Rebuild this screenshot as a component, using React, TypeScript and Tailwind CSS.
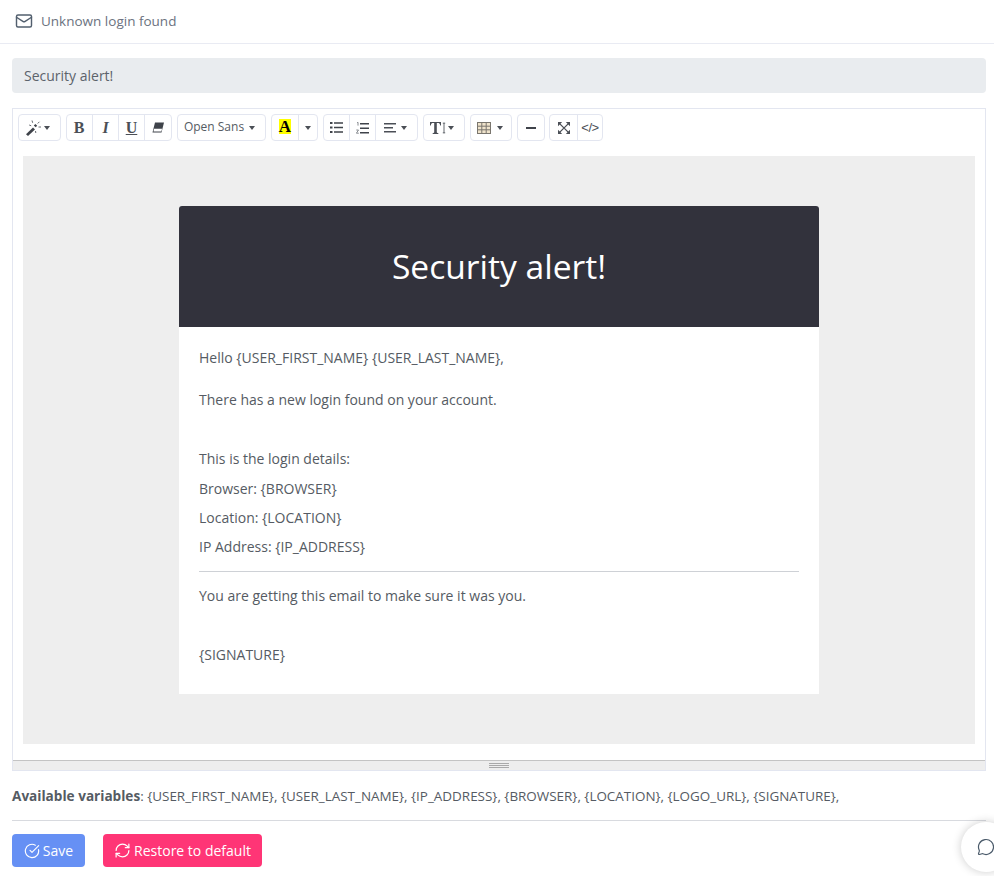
import React from 'react';
import { Mail, CircleCheckBig, RefreshCw, MessageCircle } from 'lucide-react';

const Caret = () => (
  <svg width="6" height="4" viewBox="0 0 6 4" className="shrink-0">
    <path d="M0 0h6L3 4z" fill="#4b4f56" />
  </svg>
);

const ToolBtn = ({ w, first, children }: { w: string; first?: boolean; children: React.ReactNode }) => (
  <div className={`${w} h-full flex items-center justify-center gap-[2px] ${first ? '' : 'border-l border-[#e3e6f0]'}`}>
    {children}
  </div>
);

const Group = ({ children }: { children: React.ReactNode }) => (
  <div className="flex h-[27px] border border-[#e3e6f0] rounded-[4px] bg-white">{children}</div>
);

const Wand = () => (
  <svg width="16" height="16" viewBox="0 0 16 16">
    <path d="M0 14.200 7 7.600 9 9.400 2 16z" fill="#3f434a" />
    <path d="M7.800 5.400 9.400 4l1.800 1.800-1.500 1.500z" fill="#3f434a" />
    <path d="M6 .5l.7 2.300M3.200 5l2 .8M11.700 3.500l1.700-1.700M12.500 7h2.500M9.500 11l.3 2" stroke="#666a70" strokeWidth="1" fill="none" />
  </svg>
);

const Eraser = () => (
  <svg width="12" height="11" viewBox="0 0 12 11">
    <path d="M3 .5h9L9.500 10.500H.5z" fill="#3f434a" />
    <path d="M2 6.800h8.100l-.8 2.700H1.500z" fill="#fff" />
  </svg>
);

const BulletList = () => (
  <svg width="13" height="11" viewBox="0 0 13 11">
    <path d="M0 0h2.500v2H0zM0 4.500h2.500v2H0zM0 9h2.500v2H0zM4 .2h9v1.600H4zM4 4.700h9v1.600H4zM4 9.200h9v1.600H4z" fill="#3f434a" />
  </svg>
);

const OrderedList = () => (
  <svg width="13" height="12" viewBox="0 0 13 12">
    <path d="M4 1h9v1.600H4zM4 5.500h9v1.600H4zM4 10h9v1.600H4z" fill="#3f434a" />
    <path d="M1 .3h1v3.300M.3 8h2.200L.4 11.200h2.400" stroke="#6b6f75" strokeWidth=".8" fill="none" />
  </svg>
);

const AlignLines = () => (
  <svg width="12" height="10" viewBox="0 0 12 10">
    <path d="M0 0h12v1.500H0zM0 4h9v1.500H0zM0 8h12v1.500H0z" fill="#4b4f56" />
  </svg>
);

const TextHeight = () => (
  <svg width="16" height="12" viewBox="0 0 16 12">
    <path d="M0 0h11v3.400h-.8C9.900 1.700 9.400 1.100 7.600 1.100H6.800v9c0 .7.400.9 1.500 1V12H2.700v-.9c1.100-.1 1.500-.3 1.500-1v-9H3.400C1.600 1.100 1.100 1.700.8 3.400H0z" fill="#4b4f56" />
    <path d="M14 .8v10.400M12.800 1.200h2.400M12.800 10.800h2.400" stroke="#666a70" strokeWidth="1" fill="none" />
  </svg>
);

const TableIcon = () => (
  <svg width="14" height="12" viewBox="0 0 14 12">
    <rect x=".5" y=".5" width="13" height="11" fill="#efe3cb" stroke="#7a766e" />
    <path d="M.5 4.200h13M.5 7.800h13M4.800.5v11M9.200.5v11" stroke="#7a766e" strokeWidth="1" fill="none" />
  </svg>
);

// thin four-way arrows, the summernote fullscreen glyph
const Expand = () => (
  <svg width="12" height="12" viewBox="0 0 11 11">
    <path d="M1 1 10 10M10 1 1 10" stroke="#4b4f56" strokeWidth="1.200" fill="none" />
    <path d="M0 0h3.800L0 3.800zM11 0v3.800L7.200 0zM0 11V7.200L3.800 11zM11 11H7.200L11 7.200z" fill="#4b4f56" />
  </svg>
);

const Toolbar = () => (
  <div className="flex gap-[5px] pt-[5px] pl-[5px] h-[47px]">
    <Group>
      <ToolBtn w="w-[41px] pr-[3px]" first><Wand /><Caret /></ToolBtn>
    </Group>
    <Group>
      <ToolBtn w="w-[25px] pr-[1px]" first><span className="font-['Liberation_Serif'] font-bold text-[16px] text-[#4b4f56]">B</span></ToolBtn>
      <ToolBtn w="w-[26px]"><span className="font-['Liberation_Serif'] font-bold italic text-[16px] text-[#4b4f56]">I</span></ToolBtn>
      <ToolBtn w="w-[26px]"><span className="font-['Liberation_Serif'] font-bold underline text-[16px] leading-[18px] text-[#4b4f56]">U</span></ToolBtn>
      <ToolBtn w="w-[27px]"><Eraser /></ToolBtn>
    </Group>
    <Group>
      <ToolBtn w="w-[87px] pr-[4px]" first><span className="text-[12px] leading-[16px] -mt-[1px] text-[#555b63] mr-[3px]">Open Sans</span><Caret /></ToolBtn>
    </Group>
    <Group>
      <ToolBtn w="w-[26px]" first>
        <span className="bg-[#ffff00] w-[12px] h-[15px] mb-[2px] flex items-center justify-center font-['Liberation_Serif'] font-bold text-[17px] leading-none text-black">A</span>
      </ToolBtn>
      <ToolBtn w="w-[19px]"><Caret /></ToolBtn>
    </Group>
    <Group>
      <ToolBtn w="w-[25px]" first><BulletList /></ToolBtn>
      <ToolBtn w="w-[26px]"><OrderedList /></ToolBtn>
      <ToolBtn w="w-[42px] pr-[3px]"><AlignLines /><span className="w-[1px]" /><Caret /></ToolBtn>
    </Group>
    <Group>
      <ToolBtn w="w-[40px] pr-[4px]" first><TextHeight /><Caret /></ToolBtn>
    </Group>
    <Group>
      <ToolBtn w="w-[40px] pr-[2px]" first><TableIcon /><span className="w-[2px]" /><Caret /></ToolBtn>
    </Group>
    <Group>
      <ToolBtn w="w-[26px]" first><span className="w-[10px] h-[2px] bg-[#3f434a]" /></ToolBtn>
    </Group>
    <div className="-ml-[1px] flex">
      <Group>
        <ToolBtn w="w-[27px]" first><Expand /></ToolBtn>
        <ToolBtn w="w-[25px]"><span className="text-[13px] leading-none text-[#4b4f56] font-['Liberation_Sans'] tracking-[-0.4px]">&lt;/&gt;</span></ToolBtn>
      </Group>
    </div>
  </div>
);

const EmailCard = () => (
  <div className="w-[640px] mx-auto rounded-t-[3px] overflow-hidden bg-white">
    <div className="h-[121px] bg-[#32323c] flex items-center justify-center text-white text-[33.6px]">
      Security alert!
    </div>
    <div className="px-[20px] pt-[20px] pb-[29px] text-[14px] leading-[21px] text-[#555b63]">
      <p className="mb-[21px]">Hello {'{USER_FIRST_NAME}'} {'{USER_LAST_NAME}'},</p>
      <p className="mb-[38px]">There has a new login found on your account.</p>
      <p className="mb-[9px]">This is the login details:</p>
      <p className="mb-[8px]">Browser: {'{BROWSER}'}</p>
      <p className="mb-[8px]">Location: {'{LOCATION}'}</p>
      <p className="mb-[14px]">IP Address: {'{IP_ADDRESS}'}</p>
      <div className="border-t border-[#ced1d6] mb-[13px]" />
      <p className="mb-[38px]">You are getting this email to make sure it was you.</p>
      <p>{'{SIGNATURE}'}</p>
    </div>
  </div>
);

export default function App() {
  return (
    <div className="relative w-[994px] h-[876px] overflow-hidden bg-white font-['Open_Sans',sans-serif] text-[#555b63] text-[14px]">
      <div className="h-[44px] flex items-center gap-[8px] pl-[15px] pb-[1px] border-b border-[#e9ebf3]">
        <Mail size={18} strokeWidth={1.9} color="#525f6e" className="-mt-[1px]" />
        <span className="text-[13.5px] text-[#6b7280]">Unknown login found</span>
      </div>
      <div className="px-[12px] pr-[8px] pt-[14px]">
        <div className="h-[35px] bg-[#e9ecef] rounded-[4px] flex items-center px-[12px] text-[#5c636b]">
          Security alert!
        </div>
        <div className="mt-[15px] h-[663px] border border-[#e3e6f0] flex flex-col">
          <Toolbar />
          <div className="flex-1 px-[10px]">
            <div className="h-[588px] bg-[#eeeeee] pt-[50px]">
              <EmailCard />
            </div>
          </div>
          <div className="h-[10px] bg-[#eeeeee] border-t border-[#c4c4c4] flex flex-col items-center justify-center gap-[1px]">
            <span className="w-[20px] h-[1px] bg-[#a9a9a9]" />
            <span className="w-[20px] h-[1px] bg-[#a9a9a9]" />
            <span className="w-[20px] h-[1px] bg-[#a9a9a9]" />
          </div>
        </div>
        <p className="mt-[14px] leading-[21px] text-[13.44px]">
          <b className="font-bold text-[13.6px]">Available variables</b>: {'{USER_FIRST_NAME}'}, {'{USER_LAST_NAME}'}, {'{IP_ADDRESS}'}, {'{BROWSER}'}, {'{LOCATION}'}, {'{LOGO_URL}'}, {'{SIGNATURE}'},
        </p>
        <div className="mt-[13px] border-t border-[#d8dadf]" />
        <div className="mt-[13px] flex gap-[18px]">
          <button className="w-[73px] h-[33px] rounded-[4px] bg-[#6690f4] text-white flex items-center justify-center gap-[3px]">
            <CircleCheckBig size={16} strokeWidth={1.7} />
            Save
          </button>
          <button className="w-[159px] h-[33px] rounded-[4px] bg-[#ff3576] text-white flex items-center justify-center gap-[3px]">
            <RefreshCw size={17} strokeWidth={1.7} />
            Restore to default
          </button>
        </div>
      </div>
      <div className="absolute left-[961px] top-[822px] w-[50px] h-[50px] rounded-full bg-white shadow-[0_0_10px_rgba(0,0,0,0.2)] flex items-center justify-center">
        <MessageCircle size={18} strokeWidth={1.6} color="#4a5a6a" className="-mt-[1px]" />
      </div>
    </div>
  );
}
